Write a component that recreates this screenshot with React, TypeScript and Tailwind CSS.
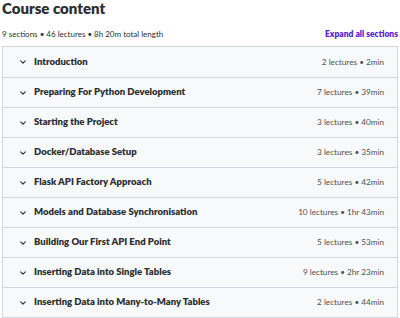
const sections = [
  { title: "Introduction", meta: "2 lectures • 2min" },
  { title: "Preparing For Python Development", meta: "7 lectures • 39min" },
  { title: "Starting the Project", meta: "3 lectures • 40min" },
  { title: "Docker/Database Setup", meta: "3 lectures • 35min" },
  { title: "Flask API Factory Approach", meta: "5 lectures • 42min" },
  { title: "Models and Database Synchronisation", meta: "10 lectures • 1hr 43min" },
  { title: "Building Our First API End Point", meta: "5 lectures • 53min" },
  { title: "Inserting Data into Single Tables", meta: "9 lectures • 2hr 23min" },
  { title: "Inserting Data into Many-to-Many Tables", meta: "2 lectures • 44min" },
];

function Chevron() {
  return (
    <svg width="6" height="4" viewBox="0 0 6 4" fill="none" className="shrink-0">
      <path d="M0.7 0.8l2.3 2.3 2.3-2.3" stroke="#2d2f31" strokeWidth="1.1" strokeLinecap="round" strokeLinejoin="round" />
    </svg>
  );
}

export default function App() {
  return (
    <div
      className="w-[400px] h-[318px] overflow-hidden bg-white px-[2px] text-[#2d2f31]"
      style={{ fontFamily: "Lato, 'Noto Sans', sans-serif" }}
    >
      <h2 className="text-[15px] font-extrabold leading-[15px] pt-[1px]">Course content</h2>
      <div className="flex items-center justify-between mt-[11px] h-[14px]">
        <span className="text-[8px] text-[#2d2f31]">9 sections • 46 lectures • 8h 20m total length</span>
        <span className="text-[8.5px] font-extrabold text-[#5624d0]">Expand all sections</span>
      </div>
      <div className="mt-[5px] border border-[#d1d7dc]">
        {sections.map((s, i) => (
          <div
            key={s.title}
            className={`flex items-center h-[30px] bg-[#f7f9fa] pl-[17px] pr-[13px] ${
              i > 0 ? "border-t border-[#d1d7dc]" : ""
            }`}
          >
            <Chevron />
            <span className="ml-[8px] text-[9.5px] font-extrabold flex-1">{s.title}</span>
            <span className="text-[8.2px] text-[#4d5154]">{s.meta}</span>
          </div>
        ))}
      </div>
    </div>
  );
}
